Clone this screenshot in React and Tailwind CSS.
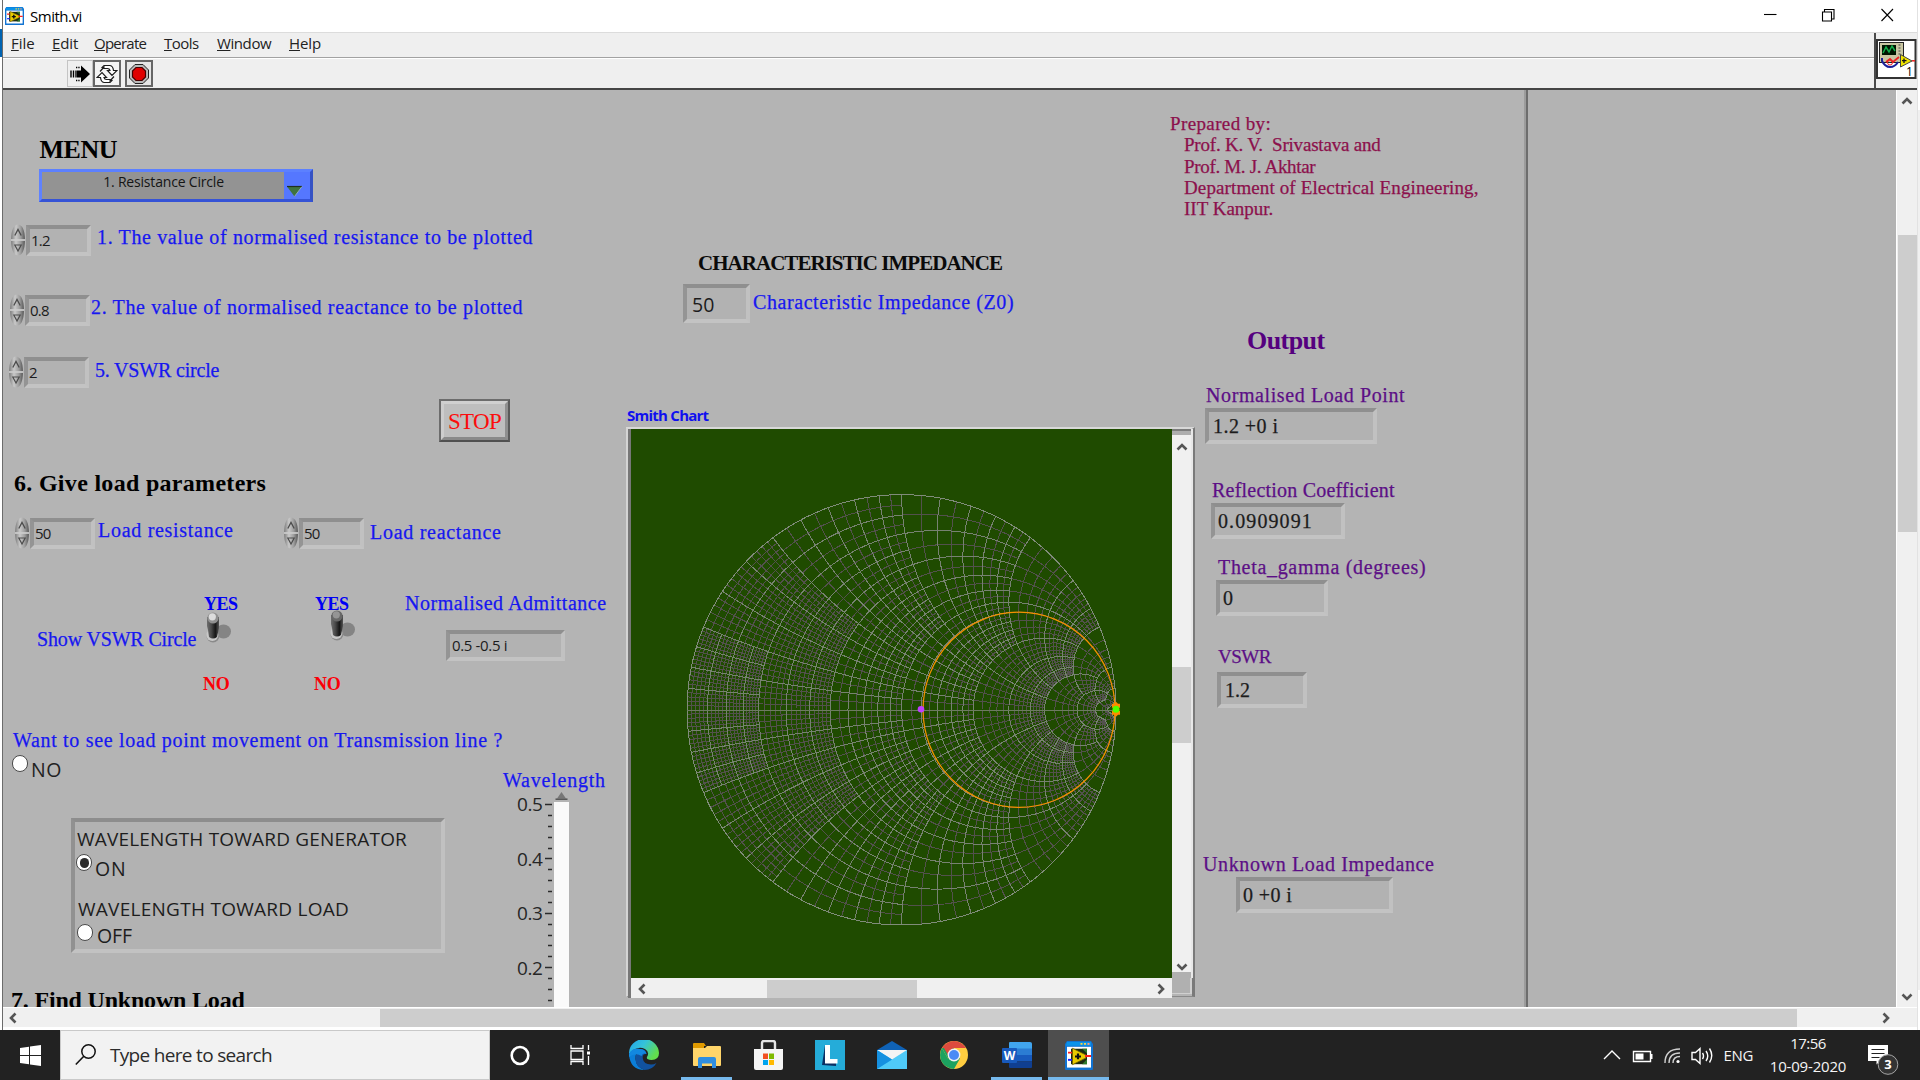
import React from "react";

const RX = 214.5;
const RY = 215.2;
const CX = 270.6;
const CY = 280.8;

/* Maps a normalised impedance r + jx to a point of the chart. */
function gamma(r, x) {
  const d = (r + 1) * (r + 1) + x * x;
  return [CX + (RX * (r * r - 1 + x * x)) / d, CY - (RY * 2 * x) / d];
}

function arc(kind, c, from, to) {
  const n = 18;
  const a = Math.atan(from);
  const b = Math.atan(to);
  const up = [];
  const down = [];
  for (let i = 0; i <= n; i++) {
    const t = Math.tan(a + ((b - a) * i) / n);
    const [px, py] = kind === "r" ? gamma(c, t) : gamma(t, c);
    up.push(`${px.toFixed(1)} ${py.toFixed(1)}`);
    down.push(`${px.toFixed(1)} ${(2 * CY - py).toFixed(1)}`);
  }
  return `M${up.join("L")}M${down.join("L")}`;
}

/* Nested square zones of the impedance plane: bound, line step, bright line step. */
const zones = [
  [0.2, 0.01, 0.05],
  [0.5, 0.02, 0.1],
  [1, 0.05, 0.1],
  [2, 0.1, 0.2],
  [5, 0.2, 1],
  [10, 1, 5],
  [20, 2, 10],
  [50, 10, 50],
];

function buildGrid() {
  let dark = "";
  let light = "";
  let inner = 0;
  zones.forEach(([bound, step, major]) => {
    const lines = [];
    for (let i = 1; i * step <= bound + 1e-6; i++) lines.push(i * step);
    for (let i = 1; i * major <= bound + 1e-6; i++) lines.push(i * major);
    lines.forEach((c) => {
      const from = c <= inner + 1e-6 ? inner : 0;
      const q = c / major;
      const d = arc("r", c, from, bound) + arc("x", c, from, bound);
      if (Math.abs(q - Math.round(q)) < 1e-4) light += d;
      else dark += d;
    });
    inner = bound;
  });
  return { dark, light };
}

const grid = buildGrid();

function SmithChart() {
  const ox = CX + RX * 0.5475;
  return (
    <svg width="541" height="549" viewBox="0 0 541 549" className="block shrink-0 bg-[#1f4b00]">
      <g fill="none" strokeWidth="1" shapeRendering="crispEdges">
        <path d={grid.dark} stroke="#53514d" />
        <path d={grid.light} stroke="#778271" />
        <ellipse cx={CX} cy={CY} rx={RX} ry={RY} stroke="#808c7a" />
        <path d={`M${CX - RX} 281.5H${CX + RX}`} stroke="#6d7b62" />
      </g>
      <ellipse cx={ox} cy={CY} rx={RX * 0.4475} ry={RY * 0.4535} fill="none" stroke="#f59000" strokeWidth="1.250" />
      <circle cx="290" cy="280.3" r="3.3" fill="#c040ff" />
      <path d="M485 272.800l2 2h2v4h-1.500v3h1.500v4h-2l-2 2-2-2h-2v-4h1.500v-3h-1.500v-4h2z" fill="#ff8a00" />
      <circle cx="485" cy="280.3" r="3.500" fill="#50ff00" />
    </svg>
  );
}

function Chevron({ dir = "up" }) {
  const d = {
    up: "M2.500 9.500l4.500-4.500 4.500 4.500",
    down: "M2.500 4.500l4.500 4.500 4.500-4.500",
    left: "M9.500 2.500l-4.500 4.500 4.500 4.500",
    right: "M4.500 2.500l4.500 4.500-4.500 4.500",
  }[dir];
  return (
    <svg width="14" height="14" viewBox="0 0 14 14" className="shrink-0">
      <path d={d} fill="none" stroke="#555" strokeWidth="2.6" />
    </svg>
  );
}

function LabViewIcon({ className }) {
  return (
    <svg viewBox="0 0 28 30" preserveAspectRatio="none" className={className}>
      <path d="M2 0h24l2 3v26q0 1-1 1H1q-1 0-1-1V3z" fill="#1173d2" />
      <path d="M2 1h24v4H1z" fill="#0a93ea" />
      <path d="M15.500 2h2v2h-2zM19 2h2v2h-2z" fill="#f3d24a" />
      <path d="M22.500 2h2v2h-2z" fill="#ff9a80" />
      <rect x="2" y="6" width="24" height="21.500" fill="#fff" />
      <rect x="6" y="8" width="16" height="16" fill="#1c2a12" />
      <path d="M17 8h5v5zM17 24h5v-5z" fill="#2f7a2c" />
      <path d="M7.500 7.500v17L21 17.500v-3z" fill="#e9cb00" stroke="#6d5a00" strokeWidth=".8" />
      <path d="M13 13v6M10 16h6" stroke="#111" strokeWidth="2.200" />
      <path d="M3 11h4v2H3zM20 14.500h6v2h-6z" fill="#f22" />
      <path d="M3 18.500h4v2H3z" fill="#1a20ff" />
    </svg>
  );
}

function Spinner() {
  return (
    <svg width="16" height="32" viewBox="0 0 16 32" className="block shrink-0">
      <defs>
        <linearGradient id="knob" x1="0" x2="1" y1="0" y2="0">
          <stop offset="0" stopColor="#7b7b7b" />
          <stop offset=".35" stopColor="#c9c9c9" />
          <stop offset=".7" stopColor="#9c9c9c" />
          <stop offset="1" stopColor="#565656" />
        </linearGradient>
      </defs>
      <path d="M1 15.500Q1.500 1 8 .5q6.500.5 7 15z" fill="url(#knob)" />
      <path d="M1 16.500q.5 14.500 7 15 6.500-.5 7-15z" fill="url(#knob)" />
      <path d="M1 16h14" stroke="#cfcfcf" strokeWidth="1.500" />
      <path d="M4.800 11.500L8 5.500l3.200 6" fill="none" stroke="#4c4c4c" strokeWidth="1.300" />
      <path d="M4.800 21h6.400L8 27z" fill="none" stroke="#4c4c4c" strokeWidth="1.200" />
    </svg>
  );
}

function Field({ className = "", children }) {
  return (
    <div
      className={
        "box-border flex shrink-0 items-center border-4 border-t-[#8f8f8f] border-r-[#c1c1c1] border-b-[#c3c3c3] border-l-[#949494] bg-[#b2b2b2] whitespace-pre text-[#1c1c1c] " +
        className
      }
    >
      {children}
    </div>
  );
}

function Numeric({ value, width }) {
  return (
    <>
      <Spinner />
      <Field className={"mt-px h-[31px] pl-px font-['Open_Sans',sans-serif] text-[15px] tracking-[-0.8px] " + width}>
        {value}
      </Field>
    </>
  );
}

function Label({ className = "", children }) {
  return (
    <div
      className={
        "shrink-0 font-['Liberation_Serif',serif] text-[20px] leading-6 whitespace-pre [-webkit-text-stroke:0.25px_currentColor] " +
        className
      }
    >
      {children}
    </div>
  );
}

function Toggle({ dim }) {
  return (
    <svg width="27" height="31" viewBox="0 0 27 31" className="block">
      <defs>
        <linearGradient id="lever" x1="0" x2="1">
          <stop offset="0" stopColor="#6e6e6e" />
          <stop offset=".35" stopColor="#4a4a4a" />
          <stop offset=".7" stopColor="#161616" />
          <stop offset="1" stopColor="#555" />
        </linearGradient>
      </defs>
      <ellipse cx="18.500" cy="19.500" rx="7.500" ry="7" fill="#848484" />
      <circle cx="8" cy="24" r="6.500" fill="#8a8a8a" />
      <circle cx="7.300" cy="23" r="6" fill="#c9c9c9" />
      <path d="M2 5h12v11l-2 9q-4 3-8 0l-1-7-1-4z" fill="url(#lever)" />
      <circle cx="8" cy="6" r="5.600" fill={dim ? "#686868" : "#909090"} />
      <circle cx="7.300" cy="4.800" r="3.600" fill={dim ? "#959595" : "#dcdcdc"} />
    </svg>
  );
}

function SwitchControl({ dim, className = "", offset = "" }) {
  return (
    <div className={"flex w-[34px] shrink-0 flex-col font-['Liberation_Serif',serif] font-bold " + className}>
      <div className="mt-[3px] ml-px text-[18px] leading-[22px] tracking-[-0.5px] text-[#0000f5]">YES</div>
      <div className={"h-[31px] " + offset}>
        <Toggle dim={dim} />
      </div>
      <div className="mt-[30px] text-[18px] leading-[22px] tracking-[-0.2px] text-[#fb0007]">NO</div>
    </div>
  );
}

function Radio({ on, className = "" }) {
  return (
    <div
      className={
        "flex h-[17px] w-4 shrink-0 items-center justify-center rounded-full border-[1.5px] border-[#4a4a4a] bg-white " +
        className
      }
    >
      {on && <div className="h-[10px] w-[9px] rounded-full bg-[#2c2c2c]" />}
    </div>
  );
}

function TopBars() {
  return (
    <>
      <div className="flex h-8 items-start bg-white">
        <LabViewIcon className="mt-[7px] ml-[2px] h-[18px] w-[19px]" />
        <div className="mt-[6px] ml-[6px] flex-1 font-['Open_Sans',sans-serif] text-[15px] leading-5 tracking-[-0.48px] text-black">
          Smith.vi
        </div>
        <svg width="130" height="14" viewBox="0 0 130 14" className="mt-2 mr-[23px]">
          <g fill="none" stroke="#000" strokeWidth="1.100">
            <path d="M0 6.500h12.500" />
            <path d="M58.500 4h9v9h-9zM60.500 4V1.500h9.500v9.500h-2.500" />
            <path d="M117.500 1l11.500 12M129 1l-11.500 12" />
          </g>
        </svg>
      </div>
      <div className="flex h-[58px] border-t border-b-2 border-t-[#dcdcdc] border-b-[#454545] bg-[#efefef]">
        <div className="flex flex-1 flex-col">
          <div className="flex h-[25px] border-b border-[#a2a2a2] pl-2 font-['Open_Sans',sans-serif] text-[15px] leading-5 text-[#222]">
            <div className="w-[41px]"><u>F</u>ile</div>
            <div className="w-[42px] tracking-[-0.1px]"><u>E</u>dit</div>
            <div className="w-[70px] tracking-[-0.76px]"><u>O</u>perate</div>
            <div className="w-[53px] tracking-[-0.52px]"><u>T</u>ools</div>
            <div className="w-[72px] tracking-[-0.41px]"><u>W</u>indow</div>
            <div className="tracking-[-0.1px]"><u>H</u>elp</div>
          </div>
          <div className="flex flex-1 items-center border-t border-white pl-16">
            <div className="flex h-[27px] w-[26px] items-center justify-center border border-[#c4c4c4]">
              <svg width="20" height="18" viewBox="0 0 20 18">
                <path d="M7 5.500h4V.5L20 9l-9 8.500v-5H7z" fill="#000" />
                <path d="M1 5.500v7M3.500 5.500v7M6 5.500v7" stroke="#000" strokeWidth="1.400" />
                <path d="M6 2.500h4M6 15.500h4" stroke="#000" strokeWidth="1.400" strokeDasharray="1.300 1" />
              </svg>
            </div>
            <div className="flex h-[27px] w-7 items-center justify-center border-2 border-[#666] bg-[#f4f4f4]">
              <svg width="22" height="20" viewBox="0 0 22 20" fill="#fff" stroke="#1d1d1d" strokeWidth="1.200">
                <path d="M8 1.500h6q3 .5 3.500 5H21l-5 5-4.500-5H14Q13.500 4.500 11.500 4.500L8 4.500 6 3.500z" />
                <path d="M14 18.500H8q-3-.5-3.500-5H1l5-5 4.500 5H8q.5 2 2.500 2h3.500l2 1z" />
                <path d="M4 7.500L8.500 2.500M18 12.500l-4.500 5" />
              </svg>
            </div>
            <div className="ml-1 flex h-[27px] w-7 items-center justify-center border-2 border-[#666] bg-[#e6e6e6]">
              <svg width="20" height="20" viewBox="0 0 20 20">
                <path d="M6 .5h8L19.500 6v8L14 19.500H6L.5 14V6z" fill="#b9b9b9" stroke="#222" />
                <path d="M7 3.500h6L16.500 7v6L13 16.500H7L3.500 13V7z" fill="#e00000" stroke="#400" strokeWidth="1.200" />
              </svg>
            </div>
          </div>
        </div>
        <div className="flex w-[43px] items-start border-l-2 border-[#4a4a4a]">
          <svg width="41" height="41" viewBox="0 0 41 41" className="mt-[6px]">
            <rect x="1" y="1" width="38.500" height="38" fill="#fff" stroke="#333" strokeWidth="2" />
            <rect x="3.500" y="3.500" width="24" height="20" fill="#c9c6a2" stroke="#222" />
            <rect x="6" y="6" width="14" height="10" fill="#001600" />
            <path d="M7 14l3-6 3 5 3-6 3 5" fill="none" stroke="#13b04a" strokeWidth="1.500" />
            <path d="M22.500 6h2M22.500 9h2M22.500 12h2M22.500 15h2" stroke="#444" strokeWidth="1.200" />
            <path d="M6 19v3q3 6 8 6t8-5" fill="none" stroke="#1a1f9a" strokeWidth="2" />
            <path d="M10 23l4-3 3 3 6-5" fill="none" stroke="#e22" strokeWidth="1.800" />
            <circle cx="14" cy="23.500" r="2.500" fill="none" stroke="#e22" />
            <path d="M24.500 15.500v12.500l11.500-6z" fill="#f1e400" stroke="#444" />
            <path d="M28 19.500v4.500M26 21.700h4.500" stroke="#111" strokeWidth="1.300" />
            <path d="M36 21.800h3" stroke="#e22" strokeWidth="1.500" />
            <text x="30" y="36.500" fontSize="12" fontFamily="Open Sans, sans-serif" fill="#000">1</text>
          </svg>
        </div>
      </div>
    </>
  );
}

const ticks = [
  ["0.5", 11], ["0.4", 66], ["0.3", 120], ["0.2", 175],
];

function WavelengthScale() {
  return (
    <div className="flex w-[102px] shrink-0 flex-col">
      <Label className="mt-[16px] tracking-[0.78px] text-[#1717f0]">Wavelength</Label>
      <div className="flex">
        <svg width="50" height="215" viewBox="0 0 50 215" className="block">
          {ticks.map(([t, y]) => (
            <text key={t} x="14" y={y + 7.500} fontSize="19" letterSpacing="-0.430" fontFamily="Open Sans, sans-serif" fill="#262626">
              {t}
            </text>
          ))}
          {Array.from({ length: 19 }, (_, i) => {
            const y = Math.round(12 + i * 10.88) + 0.5;
            return <path key={i} d={`M${i % 5 ? 45 : 42} ${y}H49`} stroke="#2b2b2b" strokeWidth="1.500" />;
          })}
        </svg>
        <div className="ml-px flex w-[15px] flex-col">
          <svg width="15" height="10" viewBox="0 0 15 10" className="block">
            <path d="M3 6.500L7.500 0 12 6.500z" fill="#777" />
            <path d="M1.500 7.200h12" stroke="#555" strokeWidth="1.500" />
          </svg>
          <div className="flex-1 bg-[#fafafa]" />
        </div>
      </div>
    </div>
  );
}

function LeftColumn() {
  return (
    <div className="flex w-[623px] shrink-0 flex-col pt-[45px]">
      <div className="ml-[36.5px] font-['Liberation_Serif',serif] text-[26px] leading-[30px] font-bold tracking-[-0.5px] text-black">
        MENU
      </div>
      <div className="mt-1 ml-9 flex h-[33px] w-[274px] border-[3px] border-t-[#5c80ff] border-r-[#3552c4] border-b-[#3553d6] border-l-[#5f82ff] bg-[#5577ff]">
        <div className="flex w-[242px] justify-center bg-[#939393] pl-px font-['Open_Sans',sans-serif] text-[14px] leading-[19px] tracking-[-0.19px] text-[#151515]">
          1. Resistance Circle
        </div>
        <svg width="26" height="27" viewBox="0 0 26 27">
          <path d="M3 14.500h15l-7.500 10z" fill="#3f7340" />
          <path d="M3 14.500h15" stroke="#20301f" strokeWidth="1.200" />
          <path d="M18 14.500l-7.500 10" stroke="#8fa7c0" />
        </svg>
      </div>

      <div className="mt-[22px] ml-[7px] flex h-8">
        <Numeric value="1.2" width="w-[65px]" />
        <Label className="mt-px ml-[6px] tracking-[0.64px] text-[#1717f0]">
          1. The value of normalised resistance to be plotted
        </Label>
      </div>
      <div className="mt-[38px] ml-[6px] flex h-8">
        <Numeric value="0.8" width="w-[65px]" />
        <Label className="mt-px ml-px tracking-[0.64px] text-[#1717f0]">
          2. The value of normalised reactance to be plotted
        </Label>
      </div>
      <div className="mt-[30px] ml-[5px] flex h-8">
        <Numeric value="2" width="w-[65px]" />
        <Label className="mt-[2px] ml-[6px] tracking-[-0.18px] text-[#1717f0]">5. VSWR circle</Label>
      </div>

      <div className="mt-[11px] ml-[436px] flex h-[43px] w-[71px] items-center justify-center border-2 border-t-[#6c6c6c] border-r-[#5a5a5a] border-b-[#505050] border-l-[#6c6c6c]">
        <div className="flex h-full w-full items-center justify-center border-[3px] border-t-[#d0d0d0] border-r-[#8f8f8f] border-b-[#8a8a8a] border-l-[#cdcdcd] bg-[#bebebe] pt-[3px] font-['Liberation_Serif',serif] text-[23px] tracking-[-0.68px] text-[#fb0d0d]">
          STOP
        </div>
      </div>

      <div className="mt-[27px] ml-[11px] font-['Liberation_Serif',serif] text-[24px] leading-7 font-bold tracking-[0.3px] text-black">
        6. Give load parameters
      </div>

      <div className="mt-5 ml-[11px] flex h-8">
        <Numeric value="50" width="w-[65px]" />
        <Label className="mt-px ml-[3px] w-[183px] tracking-[0.71px] text-[#1717f0]">Load resistance</Label>
        <div className="ml-[2px] flex">
          <Numeric value="50" width="w-[65px]" />
        </div>
        <Label className="mt-[3px] ml-[6px] tracking-[0.72px] text-[#1717f0]">Load reactance</Label>
      </div>

      <div className="mt-[41px] flex h-[104px] shrink-0">
        <Label className="mt-[37px] ml-[34px] w-[163px] tracking-[-0.16px] text-[#1717f0]">Show VSWR Circle</Label>
        <SwitchControl className="ml-[3px]" offset="-mt-[3px] ml-[2px]" />
        <SwitchControl className="ml-[77px]" dim offset="-mt-[5px] mb-[2px] ml-[15px]" />
        <div className="ml-[57px] flex flex-col pt-px">
          <Label className="tracking-[0.53px] text-[#1717f0]">Normalised Admittance</Label>
          <Field className="mt-[15px] ml-[41px] h-[31px] w-[119px] pl-[2px] font-['Open_Sans',sans-serif] text-[15px] tracking-[-0.35px]">
            0.5 -0.5 i
          </Field>
        </div>
      </div>

      <Label className="mt-[34px] ml-[10px] tracking-[0.68px] text-[#1717f0]">
        Want to see load point movement on Transmission line ?
      </Label>

      <div className="flex h-[255px] shrink-0 overflow-hidden font-['Open_Sans',sans-serif]">
        <div className="flex w-[500px] shrink-0 flex-col">
          <div className="ml-[9px] flex h-8 shrink-0">
            <Radio className="mt-[3px]" />
            <div className="mt-[5px] ml-[3px] text-[19.5px] leading-[26px] tracking-[0.6px] text-[#222]">NO</div>
          </div>
          <div className="mt-[34px] ml-[68px] box-border flex h-[135px] w-[374px] shrink-0 flex-col border-[4px] border-t-[#8d8d8d] border-r-[#c1c1c1] border-b-[#c2c2c2] border-l-[#919191] bg-[#b2b2b2] text-[#1d1d1d]">
            <div className="mt-[4px] ml-[2px] text-[19px] leading-[26px] tracking-[0.2px] whitespace-pre">
              WAVELENGTH TOWARD GENERATOR
            </div>
            <div className="ml-px flex h-[34px]">
              <Radio on className="mt-[2px]" />
              <div className="mt-1 ml-[3px] text-[19.5px] leading-[26px] tracking-[0.8px]">ON</div>
            </div>
            <div className="mt-[10px] ml-[3px] text-[19px] leading-[26px] tracking-[0.27px] whitespace-pre">
              WAVELENGTH TOWARD LOAD
            </div>
            <div className="ml-[2px] flex h-[27px]">
              <Radio className="mt-[2px]" />
              <div className="ml-[4px] text-[19.5px] leading-[27px] tracking-[-0.12px]">OFF</div>
            </div>
          </div>
          <div className="mt-[33px] ml-[8px] h-7 shrink-0 font-['Liberation_Serif',serif] text-[24px] leading-7 font-bold tracking-[-0.19px] text-black">
            7. Find Unknown Load
          </div>
        </div>
        <WavelengthScale />
      </div>
    </div>
  );
}

function CenterColumn() {
  return (
    <div className="flex w-[569px] shrink-0 flex-col">
      <div className="mt-[160px] ml-[72px] h-[26px] shrink-0 font-['Liberation_Serif',serif] text-[21px] leading-[26px] font-bold tracking-[-0.97px] whitespace-pre text-[#0a0a0a]">
        CHARACTERISTIC IMPEDANCE
      </div>
      <div className="mt-2 ml-[57px] flex h-[39px] shrink-0">
        <Field className="h-[39px] w-[67px] pt-[2px] pl-[5px] font-['Open_Sans',sans-serif] text-[19.5px] tracking-[0.1px]">50</Field>
        <Label className="mt-[6px] ml-[3px] tracking-[0.58px] text-[#1717f0]">Characteristic Impedance (Z0)</Label>
      </div>
      <div className="mt-[82px] ml-px h-5 shrink-0 font-['Open_Sans',sans-serif] text-[15px] leading-5 font-bold tracking-[-0.75px] text-[#1010ef]">
        Smith Chart
      </div>
      <div className="mt-[2px] box-border flex h-[570px] shrink-0 flex-col border-t-2 border-r-[3px] border-b border-l-2 border-t-[#d8d8d8] border-r-[#7a7a7a] border-b-[#8a8a8a] border-l-[#d4d4d4]">
        <div className="flex h-[549px] border-l-[3px] border-[#777]">
          <SmithChart />
          <div className="flex flex-1 flex-col border-r-2 border-[#e8e8e8]">
            <div className="h-[6px] border-t-2 border-[#7c7c7c] bg-[#aeaeae]" />
            <div className="flex flex-1 flex-col items-center bg-[#f0f0f0]">
              <div className="mt-[5px] h-[14px]"><Chevron dir="up" /></div>
              <div className="mt-[213px] h-[76px] w-[19px] bg-[#cdcdcd]" />
              <div className="mt-auto -mb-[2px] h-[14px]"><Chevron dir="down" /></div>
            </div>
            <div className="h-[6px] bg-[#b0b0b0]" />
          </div>
        </div>
        <div className="flex h-[20px] border-l-[3px] border-[#777]">
          <div className="flex w-[541px] items-center bg-[#f0f0f0] pt-[2px]">
            <div className="ml-[4px]"><Chevron dir="left" /></div>
            <div className="ml-[118px] h-[18px] w-[150px] bg-[#cdcdcd]" />
            <div className="mr-1 ml-auto"><Chevron dir="right" /></div>
          </div>
          <div className="h-[16px] flex-1 border-r-2 border-b border-[#d0d0d0] bg-[#b0b0b0]" />
        </div>
      </div>
    </div>
  );
}

const purple = "text-[#5c0f86] ";

function RightColumn() {
  const value = "font-['Liberation_Serif',serif] text-[20px] pl-1 h-9 [-webkit-text-stroke:0.25px_currentColor] ";
  return (
    <div className="flex w-[333px] shrink-0 flex-col">
      <div className="mt-[23px] -ml-[25px] h-[107px] shrink-0 font-['Liberation_Serif',serif] text-[19px] leading-[21.3px] whitespace-pre text-[#8c104c] [-webkit-text-stroke:0.25px_currentColor]">
        <div className="tracking-[0.38px]">Prepared by:</div>
        <div className="ml-[14px] tracking-[-0.2px]">{"Prof. K. V.  Srivastava and"}</div>
        <div className="ml-[14px] tracking-[-0.33px]">Prof. M. J. Akhtar</div>
        <div className="ml-[14px] tracking-[0.12px]">Department of Electrical Engineering,</div>
        <div className="ml-[14px]">IIT Kanpur.</div>
      </div>
      <div className="mt-[106px] ml-[52px] h-[30px] font-['Liberation_Serif',serif] text-[26px] leading-[30px] font-bold tracking-[-0.55px] text-[#55007f]">
        Output
      </div>
      <Label className={purple + "mt-[27px] ml-[11px] tracking-[0.6px]"}>Normalised Load Point</Label>
      <Field className={value + "mt-px ml-[10px] w-[172px] tracking-[0.45px]"}>1.2 +0 i</Field>
      <Label className={purple + "mt-[34px] ml-[17px] tracking-[0.22px]"}>Reflection Coefficient</Label>
      <Field className={value + "mt-px ml-4 w-[134px] pl-[3px]! tracking-[1.1px]"}>0.0909091</Field>
      <Label className={purple + "mt-4 ml-[23px] tracking-[0.69px]"}>Theta_gamma (degrees)</Label>
      <Field className={value + "mt-px ml-[21px] w-[112px] pl-[3px]!"}>0</Field>
      <Label className={purple + "mt-[29px] ml-[23px] text-[19px]! tracking-[-0.5px]"}>VSWR</Label>
      <Field className={value + "mt-[3px] ml-[22px] w-[90px]"}>1.2</Field>
      <Label className={purple + "mt-[144px] ml-2 tracking-[0.63px]"}>Unknown Load Impedance</Label>
      <Field className={value + "mt-px ml-[41px] w-[157px] pl-[3px]! tracking-[0.4px]"}>0 +0 i</Field>
    </div>
  );
}

function TaskIcon({ children, className = "" }) {
  return (
    <div className={"flex h-[50px] shrink-0 items-center justify-center border-b-[3px] pt-[3px] " + className}>{children}</div>
  );
}

function Taskbar() {
  const idle = "w-[62px] border-transparent";
  return (
    <div className="flex h-[50px] shrink-0 bg-[#222222] font-['Open_Sans',sans-serif]">
      <div className="flex w-[60px] items-center justify-center">
        <svg width="21" height="21" viewBox="0 0 21 21" fill="#fff">
          <path d="M0 3l9-1.300V10H0zM10 1.500L21 0v10H10zM0 11h9v8.300L0 18zM10 11h11v10l-11-1.500z" />
        </svg>
      </div>
      <div className="flex w-[430px] items-center border border-[#c9c9c9] bg-[#f2f2f2]">
        <svg width="22" height="22" viewBox="0 0 22 22" className="ml-[14px]">
          <circle cx="13.500" cy="7.500" r="6.700" fill="none" stroke="#111" strokeWidth="1.500" />
          <path d="M8.800 12.300L.8 20.500" stroke="#111" strokeWidth="1.600" />
        </svg>
        <div className="ml-[13px] text-[19px] tracking-[-0.68px] text-[#2b2b2b]">Type here to search</div>
      </div>
      <TaskIcon className="w-[60px] border-transparent">
        <svg width="20" height="21" viewBox="0 0 20 21"><ellipse cx="10" cy="10.500" rx="8.300" ry="8.500" fill="none" stroke="#fff" strokeWidth="2.600" /></svg>
      </TaskIcon>
      <TaskIcon className="w-[60px] border-transparent">
        <svg width="21" height="20" viewBox="0 0 21 20" fill="none" stroke="#fff" strokeWidth="1.300">
          <path d="M1 0v3.500h12V0M1 6h12v8.500H1zM1 20v-3.500h12V20M18.500 0v5M18.500 11v9" />
          <path d="M17 6.500h3v3h-3z" fill="#fff" stroke="none" />
        </svg>
      </TaskIcon>
      <TaskIcon className="w-[65px] border-transparent pl-[3px]">
        <svg width="30" height="30" viewBox="0 0 30 30">
          <defs>
            <linearGradient id="edgeA" x1="0" y1="0" x2="1" y2=".5">
              <stop offset="0" stopColor="#1fa4ee" />
              <stop offset=".5" stopColor="#35c3d9" />
              <stop offset="1" stopColor="#62dd4c" />
            </linearGradient>
          </defs>
          <path d="M0 14A15 14.500 0 0 1 30 13q0 7-7.500 7-5.500 0-4.500-3 3-5-2-8Q8 5 0 14z" fill="url(#edgeA)" />
          <path d="M0 14Q3 8 11 9q-5 4-4.500 10 .5 8 9 11Q1 30 0 14z" fill="#0b7ed8" />
          <path d="M11 9q6 0 6.500 5-4-.500-3.800 4 .8 6.500 8.300 6.500 3 0 5.500-1.500Q23.500 30 15.500 30 6.500 27 6.500 19 6.500 12 11 9z" fill="#11529f" />
          <path d="M0 14Q3 8 11 9q5 0 6.500 5-3.500-1.500-5 2-6-4-12.500 1z" fill="#1288e0" />
        </svg>
      </TaskIcon>
      <TaskIcon className="mr-[5px] ml-[6px] w-[51px] border-[#76b9ed]">
        <svg width="28" height="25" viewBox="0 0 28 25">
          <path d="M0 1q0-1 1-1h10l2 3h-2v4H0z" fill="#e09a00" />
          <path d="M0 5h12l2-2h13q1 0 1 1v18q0 1-1 1H1q-1 0-1-1z" fill="#ffd56a" />
          <path d="M5 25V16q0-2 2-2h14q2 0 2 2v9h-4v-4.500H9V25z" fill="#2f8ee0" />
        </svg>
      </TaskIcon>
      <TaskIcon className={idle}>
        <svg width="29" height="30" viewBox="0 0 29 30">
          <path d="M8 10V3q0-2 2-2h9q2 0 2 2v7" fill="none" stroke="#e5e5e5" strokeWidth="2.400" />
          <path d="M0 9h29v19q0 2-2 2H2q-2 0-2-2z" fill="#f5f5f5" />
          <path d="M9 13.500h5v5.500H9z" fill="#f25022" /><path d="M15 13.500h5v5.500h-5z" fill="#7fba00" />
          <path d="M9 20h5v5H9z" fill="#00a4ef" /><path d="M15 20h5v5h-5z" fill="#ffb900" />
        </svg>
      </TaskIcon>
      <TaskIcon className={idle}>
        <svg width="30" height="30" viewBox="0 0 30 30">
          <rect width="30" height="30" fill="#25acd9" />
          <path d="M10 5l-3 20 14 1v-4L14 20z" fill="#0b2f63" />
          <path d="M10 5h5v14h7.500v4.500H10z" fill="#fff" />
        </svg>
      </TaskIcon>
      <TaskIcon className={idle}>
        <svg width="30" height="28" viewBox="0 0 30 28">
          <path d="M15 0l15 9H0z" fill="#0f62b6" />
          <path d="M0 9h30v19H0z" fill="#28b6f0" />
          <path d="M0 28L30 9v19z" fill="#4fcaf8" />
          <path d="M0 9h30L15 18.500z" fill="#f4f4f4" />
          <path d="M0 9l15 9.500L0 28z" fill="#1590e0" />
        </svg>
      </TaskIcon>
      <TaskIcon className={idle}>
        <svg width="28" height="28" viewBox="0 0 28 28">
          <circle cx="14" cy="14" r="14" fill="#ffcd40" />
          <path d="M14 14L1.900 7A14 14 0 0 1 26.100 7H14z" fill="#dd4b3e" />
          <path d="M14 14L7.900 17.500 1.900 7A14 14 0 0 0 14 28l6-10.500z" fill="#1ca260" />
          <path d="M1.900 7L8 17.500 14 7z" fill="#1ca260" />
          <path d="M14 7.500L3 5.500 8 14z" fill="#dd4b3e" />
          <circle cx="14" cy="14" r="6.400" fill="#f1f1f1" />
          <circle cx="14" cy="14" r="5" fill="#4b8bf5" />
        </svg>
      </TaskIcon>
      <TaskIcon className="mr-[5px] ml-[6px] w-[51px] border-[#76b9ed]">
        <svg width="30" height="26" viewBox="0 0 30 26">
          <path d="M8 0h20q2 0 2 1.500V7H7V1q0-1 1-1z" fill="#41a5ee" />
          <path d="M7 6.500h23V13H7z" fill="#2b7cd3" />
          <path d="M7 13h23v6.500H7z" fill="#185abd" />
          <path d="M7 19.500h23V25q0 1-1 1H8q-1 0-1-1z" fill="#103f91" />
          <rect y="6" width="15" height="15" rx="1" fill="#185abd" />
          <text x="7.500" y="18" textAnchor="middle" fontSize="12" fontWeight="700" fontFamily="Open Sans, sans-serif" fill="#fff">W</text>
        </svg>
      </TaskIcon>
      <TaskIcon className="ml-px w-[61px] border-[#76b9ed] bg-[#4e4e4e]">
        <LabViewIcon className="h-[29px] w-7" />
      </TaskIcon>
      <div className="flex flex-1 justify-end text-[#f5f5f5]">
        <svg width="110" height="50" viewBox="0 0 110 50" fill="none" stroke="#fff" strokeWidth="1.400">
          <path d="M1 29l8-8 8 8" />
          <path d="M30.500 21.500h17v10h-17z" />
          <path d="M48.500 24v5" strokeWidth="2" />
          <path d="M32.500 23.500h8v6h-8z" fill="#fff" stroke="none" />
          <path d="M62 33q0-14 15-14M66 33q0-10 11-10M70 33q0-6.500 7-6.500" stroke="#cfcfcf" />
          <circle cx="75" cy="31.500" r="1.600" fill="#fff" stroke="none" />
          <path d="M89 22.500h3.500l4.500-4v15l-4.500-4H89zM99.500 23q2 3 0 6M103 21q3.500 5 0 10M106.500 18.500q4.500 7 0 14" />
        </svg>
        <div className="mt-[15px] ml-[10.5px] text-[15px] leading-5 tracking-[-0.31px]">ENG</div>
        <div className="ml-[17px] flex w-[76px] flex-col items-center text-[15px] leading-[23.5px] whitespace-pre">
          <div className="mt-[2px] tracking-[-0.54px]">17:56</div>
          <div className="-mt-px tracking-[-0.19px]">10-09-2020</div>
        </div>
        <svg width="54" height="50" viewBox="0 0 54 50" className="mr-[20px]">
          <path d="M22 15h20v16H34l-3.500 3.500V31H22z" fill="#fff" />
          <path d="M25.500 19.500h13M25.500 23.500h13M25.500 27.500h8" stroke="#222" strokeWidth="1.200" />
          <circle cx="42" cy="34.500" r="9.800" fill="#333" stroke="#a5a5a5" />
          <text x="42" y="39" textAnchor="middle" fontSize="13" fontWeight="700" fontFamily="Open Sans, sans-serif" fill="#fff">3</text>
        </svg>
      </div>
    </div>
  );
}

export default function App() {
  return (
    <div className="flex h-[1080px] w-[1920px] flex-col overflow-hidden bg-white">
      <div className="flex h-[1030px] shrink-0">
        <div className="flex w-[3px] shrink-0 flex-col border-r border-[#6b6b6b] bg-white">
          <div className="mt-[29px] h-7 bg-[#0063b1]" />
        </div>
        <div className="flex w-[1914px] shrink-0 flex-col">
          <TopBars />
          <div className="flex h-[917px] bg-[#b4b4b4]">
            <LeftColumn />
            <CenterColumn />
            <RightColumn />
            <div className="-ml-1 w-1 shrink-0 border-r-2 border-[#6d6d6d] bg-[#9c9c9c]" />
            <div className="flex-1 bg-[#b3b3b3]" />
            <div className="flex w-[21px] shrink-0 flex-col items-center border-l border-white bg-[#f0f0f0]">
              <div className="mt-1 h-[14px]"><Chevron dir="up" /></div>
              <div className="mt-[127px] h-[297px] w-[19px] bg-[#cdcdcd]" />
              <div className="mt-auto mb-[3px] h-[14px]"><Chevron dir="down" /></div>
            </div>
          </div>
          <div className="flex h-[20px] items-center border-t border-white bg-[#f0f0f0]">
            <div className="ml-[3px] w-[374px]"><Chevron dir="left" /></div>
            <div className="h-[18px] w-[1417px] bg-[#cdcdcd]" />
            <div className="ml-[82px]"><Chevron dir="right" /></div>
          </div>
        </div>
        <div className="flex flex-1 flex-col border-l border-[#e2e2e2] bg-white">
          <div className="mt-[110px] h-[880px] bg-[#f0f0f0]" />
        </div>
      </div>
      <Taskbar />
    </div>
  );
}
